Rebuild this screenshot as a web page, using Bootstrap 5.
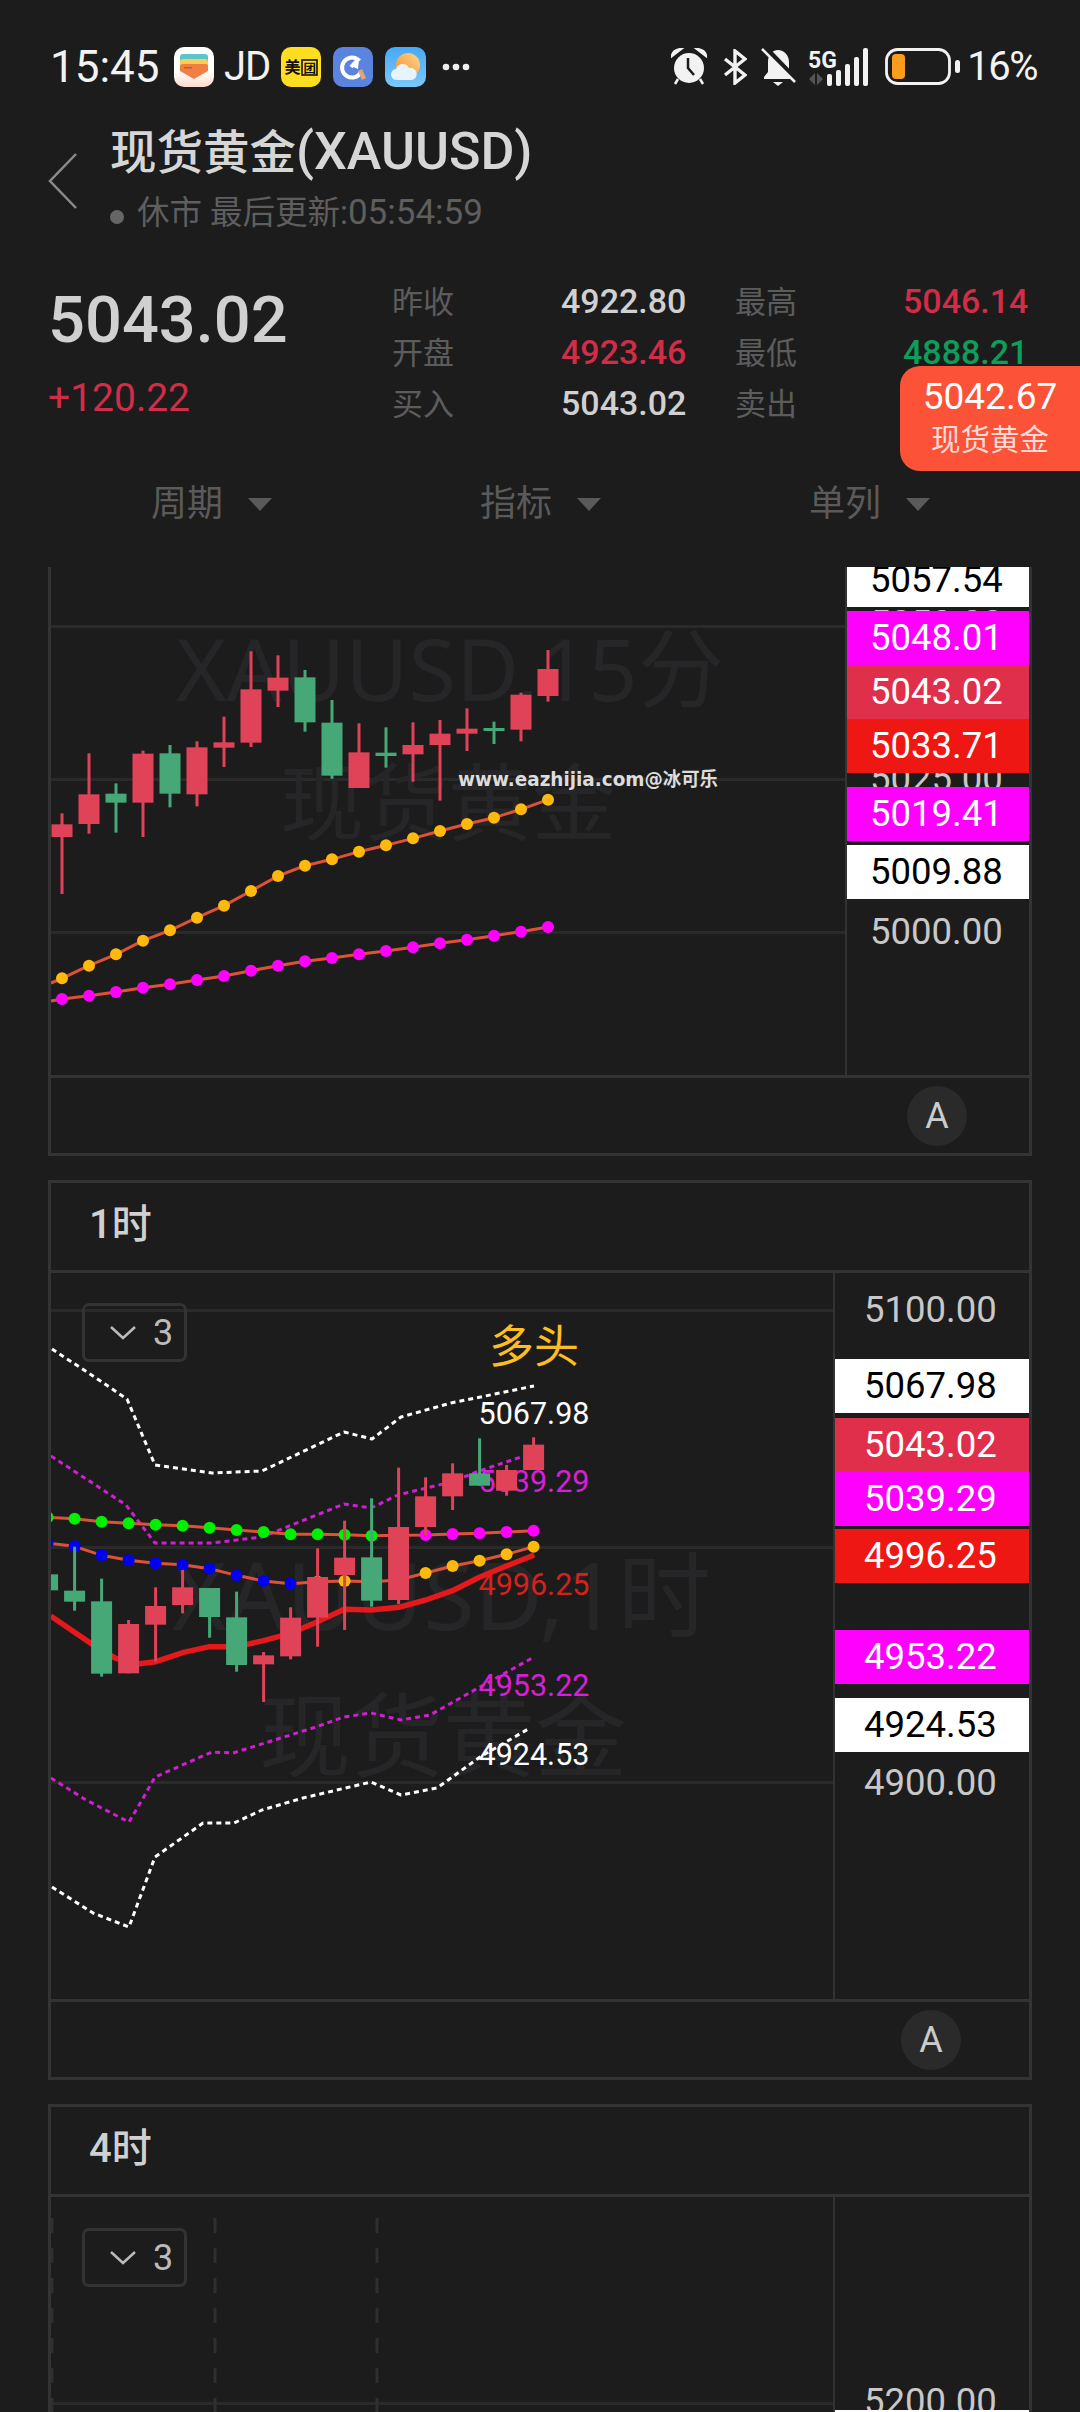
<!DOCTYPE html>
<html lang="zh-CN" data-bs-theme="dark">
<head>
  <meta charset="UTF-8" />
  <meta name="viewport" content="width=device-width, initial-scale=1.0" />
  <title>现货黄金(XAUUSD)</title>
  <link href="https://cdn.jsdelivr.net/npm/bootstrap@5.3.0/dist/css/bootstrap.min.css" rel="stylesheet">
  <style>
    html, body { height: 2412px; overflow: hidden; }
    body { background: #1c1c1c; font-family: Roboto, "Noto Sans CJK SC", sans-serif; color: #d0d0d0; }

    /* status bar */
    .status-row { height: 130px; padding: 4px 43px 0 50px; color: #f2f2f2; }
    .status-row svg { display: block; flex: none; }
    .clock-text { font-size: 44px; line-height: 1; width: 110px; margin-right: 14px; }
    .jd-text { font-size: 40px; line-height: 1; margin: 0 11px 0 10px; letter-spacing: -1px; }
    .pct-text { font-size: 40px; line-height: 1; margin-left: 6px; letter-spacing: -1.5px; }

    /* title */
    .title-row { height: 110px; padding-left: 48px; }
    .back-icon { width: 30px; margin-top: 23px; margin-right: 32px; }
    .title-text { font-size: 46.5px; font-weight: 500; line-height: 44px; color: #d6d6d6; white-space: nowrap; }
    .title-code { font-size: 52px; }
    .sub-text { font-size: 32.5px; line-height: 40px; margin-top: 18px; color: #5e5e5e; white-space: nowrap; }
    .sub-time { font-size: 35px; }
    .sub-dot { display: inline-block; width: 14px; height: 14px; border-radius: 50%; background: #666; margin-right: 13px; }

    /* quote block */
    .quote-row { height: 230px; padding-left: 48px; }
    .last-col { width: 344px; }
    .last-price { font-size: 65px; font-weight: 500; line-height: 70px; margin-top: 45px; }
    .last-change { font-size: 39px; line-height: 44px; margin-top: 21px; color: #d12c48; }
    .stat-grid { display: grid; grid-template-columns: 169px 174px 168px 130px; grid-auto-rows: 51px; margin-top: 35px; align-items: center; }
    .stat-label { font-size: 31px; color: #5c5c5c; line-height: 1; padding-top: 4px; }
    .stat-value { font-size: 34px; font-weight: 500; line-height: 1; }
    .is-up { color: #d12c48; }
    .is-down { color: #0d9e5c; }
    .float-quote { position: absolute; left: 900px; top: 366px; width: 180px; height: 105px; background: #fc5237; border-radius: 20px 0 0 20px; color: #fff; }
    .float-price { font-size: 37px; line-height: 1; margin-top: 12px; }
    .float-name { font-size: 29.5px; line-height: 1; margin-top: 11px; color: #ffdcd5; }

    /* tabs */
    .tab-row { height: 97px; color: #5a5a5a; padding: 0 0 29px 151px; }
    .tab-text { font-size: 36px; line-height: 1; }
    .tab-arrow { width: 0; height: 0; border-left: 12px solid transparent; border-right: 12px solid transparent; border-top: 13px solid #5a5a5a; margin-left: 25px; }
    .tab-cell { flex: 0 0 329px; }
    .tab-cell:last-child { flex: 0 0 auto; }

    /* chart panels */
    .chart-panel { width: 984px; margin-left: 48px; border: 3px solid #333; margin-bottom: 24px; }
    .panel-cut { border-top: 0; }
    .panel-head { height: 90px; border-bottom: 3px solid #333; font-size: 40px; font-weight: 500; padding: 0 0 4px 38px; }
    .chart-body { border-bottom: 3px solid #333; overflow: hidden; }
    .chart-body svg { display: block; flex: none; }
    .body-15m { height: 511px; }
    .body-1h { height: 729px; }
    .body-4h { height: 300px; border-bottom: 0; }
    .price-axis { flex: 1 1 auto; border-left: 2px solid #333; overflow: hidden; font-size: 36.5px; }
    .price-tag { position: absolute; left: 0; right: 0; height: 54px; line-height: 54px; color: #fff; }
    .axis-15m .price-tag { padding-left: 23px; }
    .axis-hour .price-tag { padding-left: 29px; }
    .price-grey { color: #c8c8c8; }
    .price-white { background: #fff; color: #000; }
    .price-pink { background: #f0f; }
    .price-rose { background: #df2f4a; }
    .price-red { background: #ef1714; }
    .panel-foot { height: 75px; }
    .auto-btn { width: 60px; height: 60px; border-radius: 50%; background: #2a2a2a; color: #ccc; font-size: 36px; }
    .foot-15m { padding-right: 62px; }
    .foot-1h { padding-right: 68px; }
    .layer-btn { position: absolute; left: 31px; width: 105px; height: 59px; border: 3px solid #333; border-radius: 7px; color: #bbb; font-size: 36px; gap: 17px; padding-left: 25px; }
    .layer-1h { top: 30px; }
    .layer-4h { top: 31px; }
    .wm-text { fill: #262628; font-family: "Noto Sans", "Noto Sans CJK SC", sans-serif; }
    .line-label { font-family: Roboto, sans-serif; font-size: 30.5px; text-anchor: middle; dominant-baseline: central; }
  </style>
</head>
<body>
  <!-- status bar -->
  <div class="status-row d-flex align-items-center">
    <span class="clock-text">15:45</span>
    <svg width="40" height="40" viewBox="0 0 40 40">
      <defs><linearGradient id="walletBg" x1="0" y1="0" x2="0" y2="1"><stop offset=".6" stop-color="#fff"/><stop offset="1" stop-color="#fdd9cc"/></linearGradient></defs>
      <rect width="40" height="40" rx="10" fill="url(#walletBg)"/>
      <rect x="6" y="7" width="28" height="12" rx="3" fill="#5cc5c9"/>
      <rect x="6" y="12" width="28" height="10" rx="3" fill="#f7cf57"/>
      <path d="M6 19q0-2 3-2h22q3 0 3 2v5L20 32 6 24z" fill="#ef7f42"/>
      <rect x="10" y="20" width="8" height="1.5" fill="#c85a25"/>
    </svg>
    <span class="jd-text">JD</span>
    <svg width="40" height="40" viewBox="0 0 40 40" class="me-2">
      <rect width="40" height="40" rx="10" fill="#ffdd1f"/>
      <text x="3.5" y="26" font-size="16" font-weight="700" fill="#111" font-family="Noto Sans CJK SC, sans-serif">美</text>
      <rect x="21" y="13" width="15" height="15" fill="none" stroke="#111" stroke-width="1.6"/>
      <text x="22.5" y="26" font-size="12.5" font-weight="700" fill="#111" font-family="Noto Sans CJK SC, sans-serif">团</text>
    </svg>
    <svg width="40" height="40" viewBox="0 0 40 40" class="ms-1 me-2">
      <rect width="40" height="40" rx="10" fill="#5b84e0"/>
      <path d="M28 25A10 10 0 1 1 25 12.500L18 20" fill="none" stroke="#fff" stroke-width="4"/>
      <path d="M18 19l8-6-1 9z" fill="#fff"/>
      <path d="M25 24l4-2 4 9-4 2z" fill="#e3a76c"/>
    </svg>
    <svg width="41" height="40" viewBox="0 0 41 40" class="ms-1">
      <defs>
        <linearGradient id="skyBg" x1="0" y1="0" x2="0" y2="1"><stop offset="0" stop-color="#46a9f6"/><stop offset="1" stop-color="#7cc8fa"/></linearGradient>
        <linearGradient id="sunBg" x1="1" y1="0" x2="0" y2="1"><stop offset="0" stop-color="#fdd98a"/><stop offset="1" stop-color="#f58a2e"/></linearGradient>
      </defs>
      <rect width="41" height="40" rx="10" fill="url(#skyBg)"/>
      <circle cx="23" cy="18" r="12" fill="url(#sunBg)"/>
      <path d="M12 33a5.500 5.500 0 0 1-1-11 7 7 0 0 1 13-1 5.500 5.500 0 0 1 3 12z" fill="#e8f4fb"/>
    </svg>
    <svg width="28" height="8" viewBox="0 0 28 8" class="ms-3"><g fill="#eee"><circle cx="4" cy="4" r="3.300"/><circle cx="14" cy="4" r="3.300"/><circle cx="24" cy="4" r="3.300"/></g></svg>

    <div class="d-flex align-items-center ms-auto">
      <svg width="36" height="38" viewBox="0 0 36 38" class="me-3">
        <circle cx="18" cy="20" r="15" fill="#f2f2f2"/>
        <path d="M1 8q1-6 9-7zM35 8q-1-6-9-7zM7 31l-3 5M29 31l3 5" fill="#f2f2f2" stroke="#f2f2f2" stroke-width="2.500"/>
        <path d="M17 10v10l6 7" fill="none" stroke="#1c1c1c" stroke-width="2.500"/>
      </svg>
      <svg width="24" height="36" viewBox="0 0 24 36" style="margin-right:14px">
        <path d="M2 10l20 16-10 8V2l10 8L2 26" fill="none" stroke="#f2f2f2" stroke-width="3.400"/>
      </svg>
      <svg width="35" height="39" viewBox="0 0 35 39" style="margin-right:12px">
        <path d="M17 2c6 0 11 5 11 12v10l4 5v2H3v-2l4-5V14C7 7 11 2 17 2z" fill="#f2f2f2"/>
        <path d="M12 34h10l-5 4z" fill="#f2f2f2"/>
        <path d="M3 -1L35 32" stroke="#1c1c1c" stroke-width="6"/>
        <path d="M1 1L34 34" stroke="#f2f2f2" stroke-width="2.500"/>
      </svg>
      <svg width="61" height="39" viewBox="0 0 61 39" style="margin-right:16px">
        <text x="0" y="19.500" font-size="23" font-weight="700" fill="#f2f2f2" font-family="Roboto, sans-serif">5G</text>
        <path d="M1 31l6-6v12zM9 25l6 6-6 6z" fill="#555"/>
        <g fill="#f2f2f2">
          <rect x="19" y="26" width="5" height="12" rx="2"/>
          <rect x="28" y="22" width="5" height="16" rx="2"/>
          <rect x="37" y="16" width="5" height="22" rx="2"/>
          <rect x="46" y="9" width="5" height="29" rx="2"/>
          <rect x="55" y="0" width="5" height="38" rx="2"/>
        </g>
      </svg>
      <svg width="76" height="38" viewBox="0 0 76 38">
        <rect x="1.500" y="1.500" width="63" height="34" rx="11" fill="none" stroke="#f2f2f2" stroke-width="2.800"/>
        <rect x="7" y="6" width="13" height="25" rx="4" fill="#fb9d1c"/>
        <rect x="70" y="12" width="5" height="13" rx="2.500" fill="#f2f2f2"/>
      </svg>
      <span class="pct-text">16%</span>
    </div>
  </div>

  <!-- title -->
  <div class="title-row d-flex">
    <svg class="back-icon" width="30" height="56" viewBox="0 0 30 56"><path d="M28 1L2 28l26 27" fill="none" stroke="#8a8a8a" stroke-width="2.500"/></svg>
    <div>
      <div class="title-text">现货黄金<span class="title-code">(XAUUSD)</span></div>
      <div class="sub-text"><span class="sub-dot"></span>休市 最后更新:<span class="sub-time">05:54:59</span></div>
    </div>
  </div>

  <!-- quote -->
  <div class="quote-row d-flex">
    <div class="last-col">
      <div class="last-price">5043.02</div>
      <div class="last-change">+120.22</div>
    </div>
    <div class="stat-grid">
      <span class="stat-label">昨收</span><span class="stat-value">4922.80</span>
      <span class="stat-label">最高</span><span class="stat-value is-up">5046.14</span>
      <span class="stat-label">开盘</span><span class="stat-value is-up">4923.46</span>
      <span class="stat-label">最低</span><span class="stat-value is-down">4888.21</span>
      <span class="stat-label">买入</span><span class="stat-value">5043.02</span>
      <span class="stat-label">卖出</span><span class="stat-value"></span>
    </div>
  </div>
  <div class="float-quote text-center">
    <div class="float-price">5042.67</div>
    <div class="float-name">现货黄金</div>
  </div>

  <!-- tabs -->
  <div class="tab-row d-flex align-items-center">
    <div class="tab-cell d-flex align-items-center"><span class="tab-text">周期</span><span class="tab-arrow"></span></div>
    <div class="tab-cell d-flex align-items-center"><span class="tab-text">指标</span><span class="tab-arrow"></span></div>
    <div class="tab-cell d-flex align-items-center"><span class="tab-text">单列</span><span class="tab-arrow"></span></div>
  </div>

  <!-- 15 min, scrolled under the tabs -->
  <section class="chart-panel panel-cut">
    <div class="chart-body body-15m d-flex">
      <svg id="chart15" width="794" height="508" viewBox="51 567 794 508"></svg>
      <div class="price-axis axis-15m position-relative" id="axis15"></div>
    </div>
    <div class="panel-foot foot-15m d-flex align-items-center justify-content-end">
      <span class="auto-btn d-flex align-items-center justify-content-center">A</span>
    </div>
  </section>

  <!-- 1 hour -->
  <section class="chart-panel">
    <div class="panel-head d-flex align-items-center">1时</div>
    <div class="chart-body body-1h d-flex position-relative">
      <svg id="chart1h" width="782" height="726" viewBox="51 1273 782 726"></svg>
      <div class="price-axis axis-hour position-relative" id="axis1h"></div>
      <div class="layer-btn layer-1h d-flex align-items-center">
        <svg width="26" height="14" viewBox="0 0 26 14"><path d="M1 1l12 11L25 1" fill="none" stroke="#bbb" stroke-width="2.500"/></svg><span>3</span>
      </div>
    </div>
    <div class="panel-foot foot-1h d-flex align-items-center justify-content-end">
      <span class="auto-btn d-flex align-items-center justify-content-center">A</span>
    </div>
  </section>

  <!-- 4 hour, runs off the bottom -->
  <section class="chart-panel">
    <div class="panel-head d-flex align-items-center">4时</div>
    <div class="chart-body body-4h d-flex position-relative">
      <svg id="chart4h" width="782" height="300" viewBox="51 2197 782 300"></svg>
      <div class="price-axis axis-hour position-relative" id="axis4h"></div>
      <div class="layer-btn layer-4h d-flex align-items-center">
        <svg width="26" height="14" viewBox="0 0 26 14"><path d="M1 1l12 11L25 1" fill="none" stroke="#bbb" stroke-width="2.500"/></svg><span>3</span>
      </div>
    </div>
  </section>

  <script>
    const RED = "#e04257", GREEN = "#46a877", LINE = "#dd5237";

    // [color, bodyTop, bodyBottom, wickTop, wickBottom]
    function drawCandles(list, xOf) {
      return list.map((c, i) => {
        const x = xOf(i), col = c[0] === "r" ? RED : GREEN;
        return `<rect x="${x - 1.5}" y="${c[3]}" width="3" height="${c[4] - c[3]}" fill="${col}"/>` +
               `<rect x="${x - 10.5}" y="${c[1]}" width="21" height="${c[2] - c[1]}" fill="${col}"/>`;
      }).join("");
    }

    function pts(list) {
      return list.map(p => p.join(",")).join(" ");
    }

    function drawLine(list, color, width, dash) {
      return `<polyline points="${pts(list)}" fill="none" stroke="${color}" stroke-width="${width}"` +
             (dash ? ` stroke-dasharray="${dash}"` : "") + ` stroke-linejoin="round"/>`;
    }

    function drawDots(list, colorOf) {
      return list.map((p, i) => {
        const c = colorOf(i);
        return c ? `<circle cx="${p[0]}" cy="${p[1]}" r="6" fill="${c}"/>` : "";
      }).join("");
    }

    function grid(y, x2) {
      return `<rect x="51" y="${y - 1}" width="${x2 - 51}" height="3" fill="#2a2a2a"/>`;
    }

    function watermark(text, x, y, size) {
      return `<text class="wm-text" x="${x}" y="${y}" font-size="${size}" dominant-baseline="central">${text}</text>`;
    }

    function label(text, x, y, color) {
      return `<text class="line-label" x="${x}" y="${y}" fill="${color}">${text}</text>`;
    }

    function addTags(el, tags, top) {
      el.innerHTML = tags.map(t =>
        `<div class="price-tag ${t[2]}" style="top:${t[1] - 27 - top}px">${t[0]}</div>`).join("");
    }

    // ---- 15 min ----
    const y15 = p => 620 + p / 3;
    const x15 = i => 62 + 27 * i;
    const c15 = [
      ["r",613,651,580,822],["r",523,612,400,641],["g",521,548,490,638],["r",401,548,392,651],
      ["g",400,521,375,562],["r",382,523,364,559],["r",367,383,290,441],["r",208,368,94,381],
      ["r",173,212,106,261],["g",172,307,150,335],["g",308,467,240,476],["r",397,504,310,504],
      ["g",398,408,322,443],["r",375,403,307,485],["r",341,375,300,542],["r",326,341,265,393],
      ["g",324,333,305,372],["r",224,329,218,364],["r",147,228,90,245]
    ].map(c => [c[0], y15(c[1]), y15(c[2]), y15(c[3]), y15(c[4])]);
    const orange15 = [1075,1037,1003,962,931,893,857,813,768,737,718,695,676,655,633,612,593,568,539].map((p, i) => [x15(i), y15(p)]);
    const pink15 = [1137,1127,1116,1103,1093,1080,1068,1052,1037,1024,1014,1003,993,982,970,959,947,935,921].map((p, i) => [x15(i), y15(p)]);

    document.getElementById("chart15").innerHTML =
      grid(626, 846) + grid(779, 846) + grid(932, 846) +
      watermark("XAUUSD,15分", 176, 667, 86.5) + watermark("现货黄金", 280, 801, 84) +
      drawLine([[51, 983]].concat(orange15), LINE, 3) + drawLine([[51, 1001]].concat(pink15), LINE, 3) +
      drawDots(orange15, () => "#fdb90c") + drawDots(pink15, () => "#f0f") +
      drawCandles(c15, x15) +
      `<text x="458" y="779" font-size="19" font-weight="700" fill="#ddd" dominant-baseline="central" font-family="DejaVu Sans, Noto Sans CJK SC, sans-serif" textLength="260" lengthAdjust="spacingAndGlyphs">www.eazhijia.com@冰可乐</text>`;

    addTags(document.getElementById("axis15"), [
      ["5050.00", 624, "price-grey"], ["5025.00", 779, "price-grey"], ["5000.00", 932, "price-grey"],
      ["5057.54", 580, "price-white"], ["5048.01", 638, "price-pink"], ["5043.02", 692, "price-rose"],
      ["5033.71", 746, "price-red"], ["5019.41", 814, "price-pink"], ["5009.88", 872, "price-white"]
    ], 567);

    // ---- 1 hour ----
    const xh = i => 47.6 + 27 * i;
    const xz = p => 30 + p / 2.8;
    const yz = p => 1380 + p / 3;
    const c1h = [
      ["g",583,631,583,631],["g",632,665,500,692],["g",664,881,596,890],["r",732,880,720,880],
      ["r",678,734,622,845],["r",622,675,570,700],["g",624,711,624,773],["g",712,855,635,875],
      ["r",826,853,816,966],["r",713,829,682,838],["r",591,713,505,800],["r",533,585,422,750],
      ["g",532,662,355,680],["r",441,660,263,672],["r",349,441,292,465],["r",280,349,250,390],
      ["g",280,317,175,317],["r",270,332,255,347],["r",194,270,172,270]
    ].map(c => [c[0], yz(c[1]), yz(c[2]), yz(c[3]), yz(c[4])]);
    const topMa = [412,416,425,430,434,437,443,450,456,463,463,464,467,466,465,462,460,456,452].map((p, i) => [xh(i), yz(p)]);
    const lowMa = [489,499,526,541,550,554,566,586,603,611,605,603,605,600,579,558,542,523,500].map((p, i) => [xh(i), yz(p)]);
    const thickMa = [[58,708],[170,790],[240,835],[300,852],[352,845],[430,817],[503,800],[578,800],[654,782],[730,760],[805,725],[880,688],[956,690],[1032,682],[1108,660],[1183,632],[1258,592],[1334,558],[1412,525]].map(p => [xz(p[0]), yz(p[1])]);

    const whiteUp = [[52,1349],[90,1374],[127,1399],[155,1465],[212,1473],[262,1471],[344,1432],[372,1439],[401,1417],[451,1403],[534,1386]];
    const pinkUp = [[51,1456],[126,1505],[155,1543],[212,1543],[262,1537],[344,1504],[371,1508],[398,1495],[451,1482],[479,1471],[533,1453]];
    const pinkLow = [[51,1778],[86,1800],[129,1822],[142,1800],[155,1777],[212,1752],[233,1753],[316,1727],[344,1717],[371,1713],[401,1720],[430,1715],[480,1687],[534,1657]];
    const whiteLow = [[52,1887],[93,1913],[129,1927],[155,1857],[203,1823],[234,1823],[262,1810],[303,1798],[371,1782],[401,1795],[437,1788],[480,1757],[530,1728]];

    document.getElementById("chart1h").innerHTML =
      grid(1310, 834) + grid(1547, 834) + grid(1782, 834) +
      watermark("XAUUSD,1时", 172, 1593, 93.5) + watermark("现货黄金", 259, 1734, 92) +
      label("5067.98", 534, 1413, "#fff") + label("5039.29", 534, 1481, "#d81fd8") +
      label("4996.25", 534, 1584, "#d8201b") + label("4953.22", 534, 1685, "#d81fd8") +
      label("4924.53", 534, 1754, "#fff") +
      `<text x="534" y="1343" font-size="45" fill="#fdbe1e" text-anchor="middle" dominant-baseline="central" font-family="Noto Sans CJK SC, sans-serif">多头</text>` +
      drawLine(whiteUp, "#fff", 3, "5 4") + drawLine(pinkUp, "#d01fd0", 3, "5 4") +
      drawLine(pinkLow, "#d01fd0", 3, "5 4") + drawLine(whiteLow, "#fff", 3, "5 4") +
      drawLine(topMa, LINE, 3) + drawLine(lowMa, LINE, 3) +
      drawLine(thickMa, "#e5181b", 5.5) +
      drawDots(topMa, i => i < 13 ? "#00f000" : "#f0f") +
      drawDots(lowMa, i => i < 10 ? "#0000f0" : "#fdb90c") +
      drawCandles(c1h, xh);

    addTags(document.getElementById("axis1h"), [
      ["5100.00", 1309.5, "price-grey"], ["4900.00", 1782.5, "price-grey"],
      ["5067.98", 1386, "price-white"], ["5043.02", 1445, "price-rose"], ["5039.29", 1499, "price-pink"],
      ["4996.25", 1556, "price-red"], ["4953.22", 1657, "price-pink"], ["4924.53", 1725, "price-white"]
    ], 1273);

    // ---- 4 hour ----
    const dash = x => `<line x1="${x}" y1="2203" x2="${x}" y2="2412" stroke="#2f2f2f" stroke-width="3" stroke-dasharray="15 15" stroke-dashoffset="15"/>`;
    document.getElementById("chart4h").innerHTML = grid(2403, 834) + dash(52) + dash(215) + dash(377);

    addTags(document.getElementById("axis4h"), [
      ["5200.00", 2402, "price-grey"], ["", 2437, "price-white"]
    ], 2197);
  </script>
  <script src="https://cdn.jsdelivr.net/npm/bootstrap@5.3.0/dist/js/bootstrap.bundle.min.js"></script>
</body>
</html>
